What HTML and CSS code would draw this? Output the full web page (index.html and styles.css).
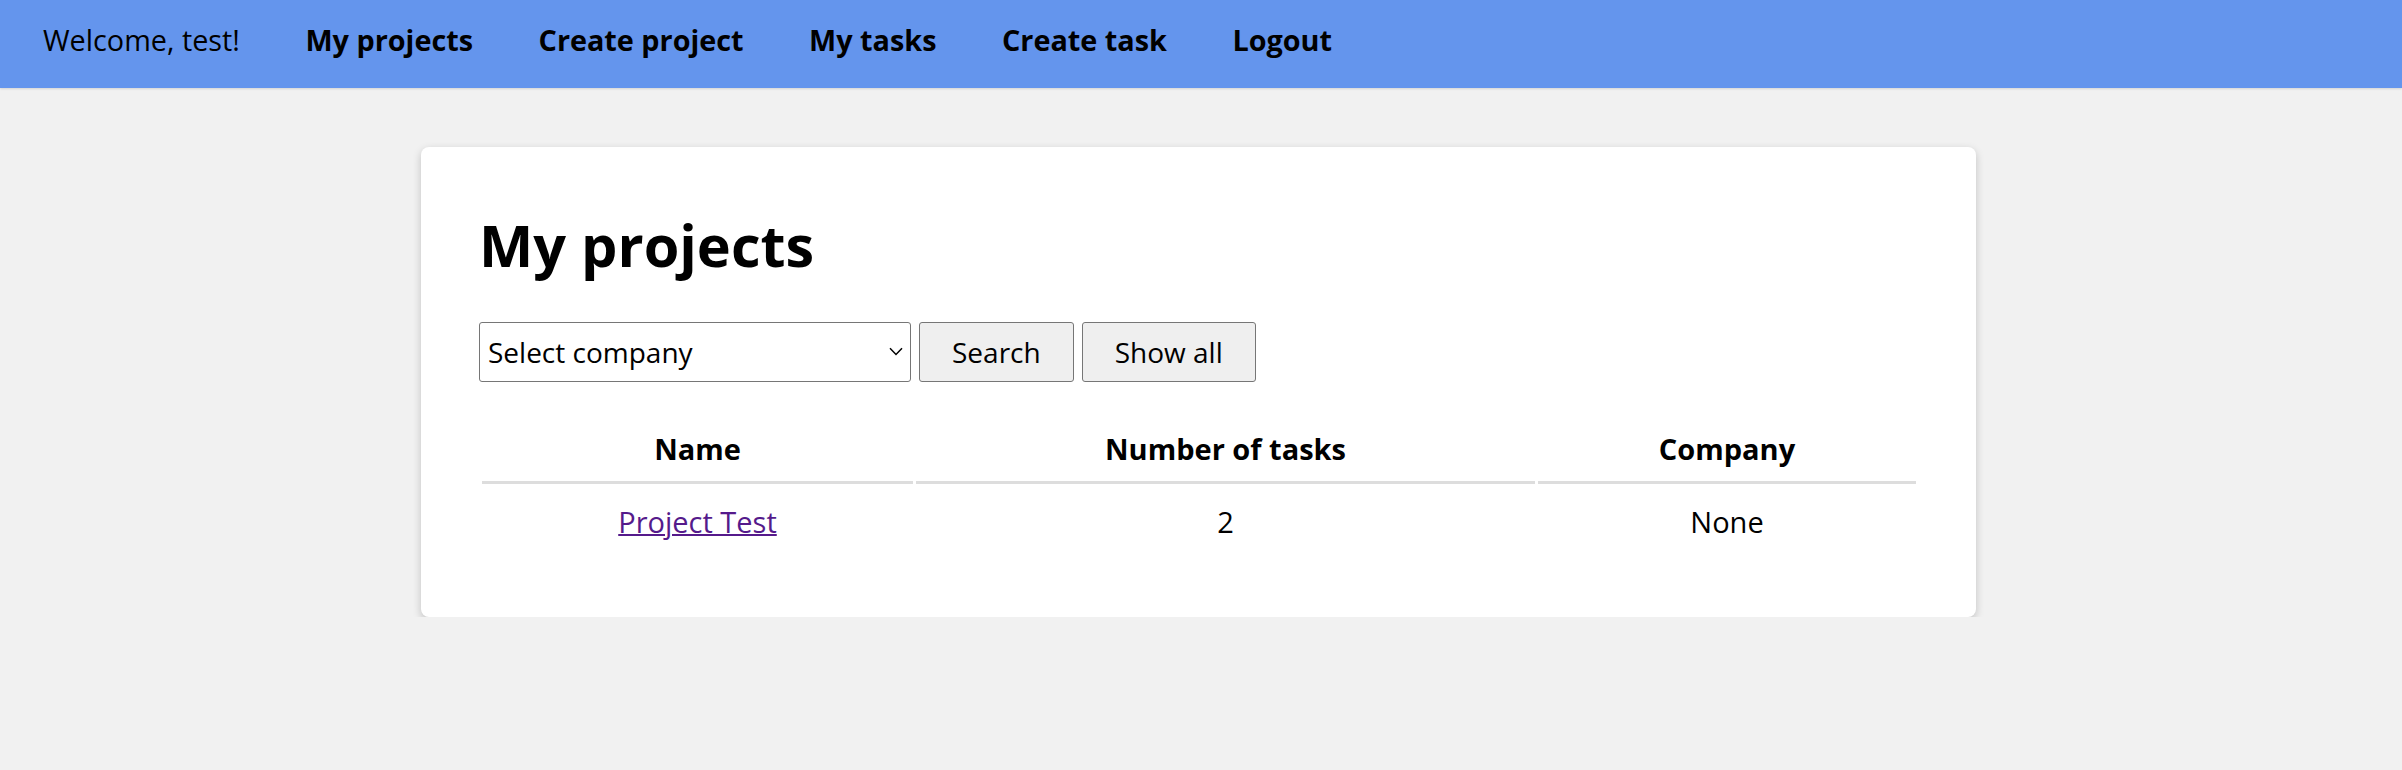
FILE: index.html
```html
<!DOCTYPE html>
<html lang="en">
<head>
<meta charset="utf-8">
<title>My projects</title>
<link rel="stylesheet" href="styles.css">
</head>
<body>
<nav class="topnav">
  <span class="welcome">Welcome, test!</span>
  <a class="nav-link" href="#">My projects</a>
  <a class="nav-link" href="#">Create project</a>
  <a class="nav-link" href="#">My tasks</a>
  <a class="nav-link" href="#">Create task</a>
  <a class="nav-link" href="#">Logout</a>
</nav>
<div class="page">
  <main class="card">
    <h1 class="title">My projects</h1>
    <form class="filter">
      <span class="select-wrap">
        <select class="company-select">
          <option>Select company</option>
        </select>
        <svg class="chevron" width="14" height="9" viewBox="0 0 14 9"><path d="M1 1.2 L7 7.4 L13 1.2" fill="none" stroke="#000" stroke-width="1.5"/></svg>
      </span>
      <button type="button" class="btn">Search</button>
      <button type="button" class="btn">Show all</button>
    </form>
    <table class="projects">
      <colgroup>
        <col class="col-name">
        <col class="col-tasks">
        <col class="col-company">
      </colgroup>
      <thead>
        <tr><th>Name</th><th>Number of tasks</th><th>Company</th></tr>
      </thead>
      <tbody>
        <tr><td><a class="proj-link" href="#">Project Test</a></td><td>2</td><td>None</td></tr>
      </tbody>
    </table>
  </main>
</div>
</body>
</html>
```

FILE: styles.css
```css
html, body {
  margin: 0;
  padding: 0;
}
body {
  background: #f1f1f1;
  font-family: "Open Sans", "Noto Sans", sans-serif;
  font-size: 29px;
  color: #000;
}
.topnav {
  display: flex;
  align-items: flex-start;
  gap: 65.5px;
  height: 88px;
  box-sizing: border-box;
  padding: 20px 43px 0;
  background: #6495ed;
  box-shadow: 0 1px 2px rgba(0,0,0,0.12);
  font-size: 28.8px;
}
.welcome {
  font-weight: 400;
}
.nav-link {
  color: #000;
  font-weight: 700;
  text-decoration: none;
}
.page {
  padding: 59px 5px 0 0;
}
.card {
  display: block;
  width: 1555px;
  box-sizing: border-box;
  margin: 0 auto;
  padding: 58px 57px 59px 58px;
  background: #fff;
  border-radius: 8px;
  box-shadow: 0 3px 8px rgba(0,0,0,0.2);
}
.title {
  font-size: 57.6px;
  font-weight: 700;
  margin: 0 0 38px;
}
.filter {
  display: flex;
  align-items: center;
  gap: 8px;
  margin: 0;
}
.select-wrap {
  position: relative;
  display: block;
}
.company-select {
  -webkit-appearance: none;
  appearance: none;
  display: block;
  width: 432px;
  height: 60px;
  box-sizing: border-box;
  margin: 0;
  padding: 0 40px 0 8px;
  font-family: inherit;
  font-size: 28px;
  color: #000;
  background: #fff;
  border: 1px solid #767676;
  border-radius: 3px;
}
.chevron {
  position: absolute;
  right: 8px;
  top: 25px;
}
.btn {
  height: 60px;
  box-sizing: border-box;
  margin: 0;
  padding: 0 32px;
  font-family: inherit;
  font-size: 28px;
  color: #000;
  background: #efefef;
  border: 1px solid #767676;
  border-radius: 3px;
}
.projects {
  width: 100%;
  margin-top: 30px;
  border-collapse: separate;
  border-spacing: 3px;
  table-layout: fixed;
}
.col-name { width: 431px; }
.col-tasks { width: 619px; }
.projects th {
  font-weight: 700;
  text-align: center;
  padding: 14px 4px 13px;
  border-bottom: 3px solid #dddddd;
}
.projects td {
  text-align: center;
  padding: 15px 4px 14px;
}
.proj-link {
  color: #551a8b;
  text-decoration: underline;
  text-decoration-thickness: 2px;
}
```
